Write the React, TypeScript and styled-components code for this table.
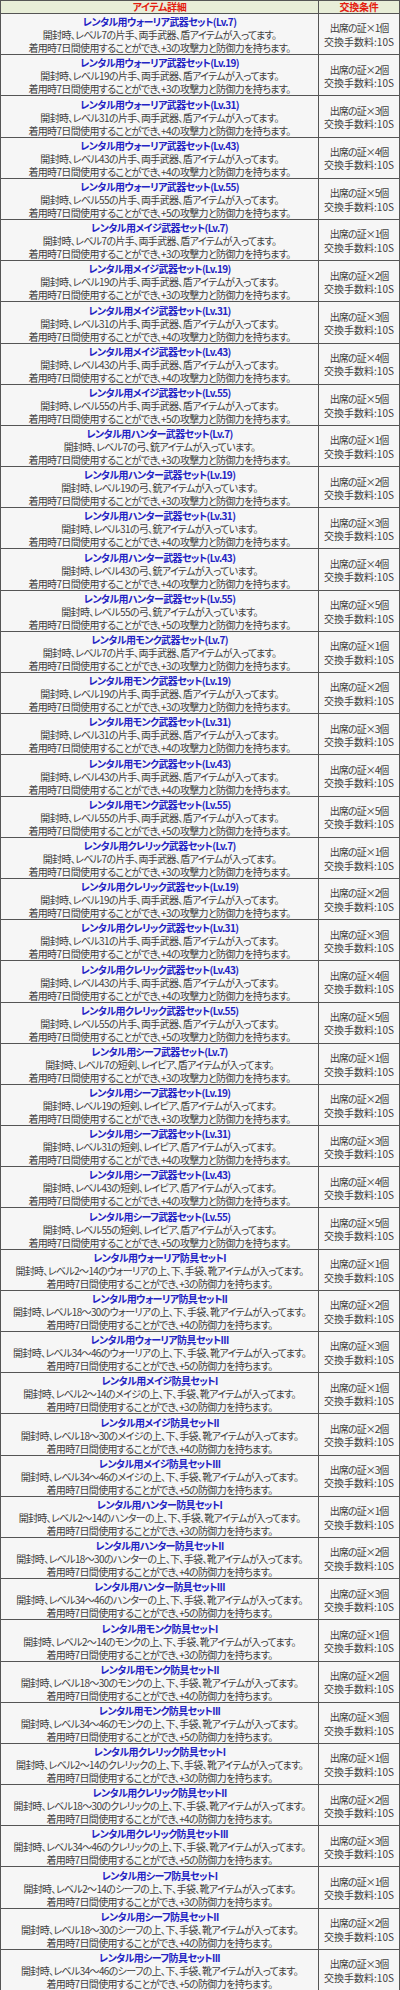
import React from "react";
import styled, { createGlobalStyle } from "styled-components";

const Global = createGlobalStyle`
  html, body { margin: 0; padding: 0; background: #ffffff; }
  body { font-family: "Noto Sans CJK JP", "Noto Sans", sans-serif; }
`;

const Table = styled.table`
  width: 400px;
  border-collapse: collapse;
  table-layout: fixed;
  font-family: "Noto Sans CJK JP", sans-serif;
`;

const HeadCell = styled.th<{ $w: number }>`
  width: ${(p) => p.$w}px;
  height: 12px;
  padding: 0;
  background: #e8eed8;
  border: 1px solid #555555;
  color: #e41c10;
  font-size: 10px;
  font-weight: bold;
  line-height: 12px;
  text-align: center;
  font-feature-settings: "palt";
  letter-spacing: -0.3px;
`;

const Row = styled.tr`
  height: 41.17px;
`;

const Cell = styled.td`
  padding: 1.2px 0 0 0;
  background: #f6f6f6;
  border: 1px solid #555555;
  text-align: center;
  vertical-align: middle;
  font-size: 10px;
  line-height: 13px;
  color: #404040;
  white-space: nowrap;
  overflow: hidden;
`;

const DetailCell = styled(Cell)`
  font-feature-settings: "palt";
  letter-spacing: -0.65px;
`;

const CondCell = styled(Cell)`
  font-feature-settings: normal;
  line-height: 13.4px;
  padding-top: 1.6px;
`;

const Title = styled.div`
  color: #2323c4;
  font-weight: bold;
  letter-spacing: -0.6px;
`;

const Line = styled.div<{ $tight?: boolean }>`
  letter-spacing: ${(p) => (p.$tight ? "-1px" : "inherit")};
`;

type Item = { title: string; l1: string; l2: string; n: number };

const classes = ["ウォーリア", "メイジ", "ハンター", "モンク", "クレリック", "シーフ"];
const levels = [7, 19, 31, 43, 55];
const wBonus = [3, 3, 4, 4, 5];

const items: Item[] = [];
classes.forEach((cls) => {
  levels.forEach((lv, i) => {
    let l1 = `開封時、レベル${lv}の片手、両手武器、盾アイテムが入ってます。`;
    if (cls === "ハンター") l1 = `開封時、レベル${lv}の弓、銃アイテムが入っています。`;
    if (cls === "シーフ") l1 = `開封時、レベル${lv}の短剣、レイピア、盾アイテムが入ってます。`;
    items.push({
      title: `レンタル用${cls}武器セット(Lv.${lv})`,
      l1,
      l2: `着用時7日間使用することができ、+${wBonus[i]}の攻撃力と防御力を持ちます。`,
      n: i + 1,
    });
  });
});
const tiers = ["I", "II", "III"];
const ranges = ["2～14", "18～30", "34～46"];
classes.forEach((cls) => {
  tiers.forEach((t, i) => {
    items.push({
      title: `レンタル用${cls}防具セット${t}`,
      l1: `開封時、レベル${ranges[i]}の${cls}の上、下、手袋、靴アイテムが入ってます。`,
      l2: `着用時7日間使用することができ、+${i + 3}の防御力を持ちます。`,
      n: i + 1,
    });
  });
});

export default function App() {
  return (
    <>
      <Global />
      <Table>
        <thead>
          <tr>
            <HeadCell $w={317}>アイテム詳細</HeadCell>
            <HeadCell $w={80}>交換条件</HeadCell>
          </tr>
        </thead>
        <tbody>
          {items.map((it, idx) => (
            <Row key={idx}>
              <DetailCell>
                <Title>{it.title}</Title>
                <Line>{it.l1}</Line>
                <Line>{it.l2}</Line>
              </DetailCell>
              <CondCell>
                <Line $tight>出席の証×{it.n}個</Line>
                <Line>交換手数料:10S</Line>
              </CondCell>
            </Row>
          ))}
        </tbody>
      </Table>
    </>
  );
}
